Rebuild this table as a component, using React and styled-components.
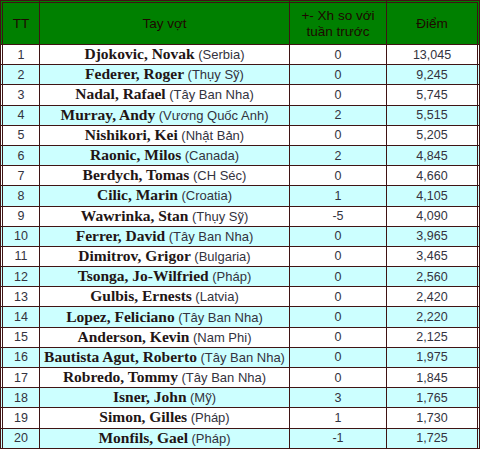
import React from "react";
import styled, { createGlobalStyle } from "styled-components";

const players = [
    ["Djokovic, Novak", "Serbia", "0", "13,045"],
    ["Federer, Roger", "Thụy Sỹ", "0", "9,245"],
    ["Nadal, Rafael", "Tây Ban Nha", "0", "5,745"],
    ["Murray, Andy", "Vương Quốc Anh", "2", "5,515"],
    ["Nishikori, Kei", "Nhật Bản", "0", "5,205"],
    ["Raonic, Milos", "Canada", "2", "4,845"],
    ["Berdych, Tomas", "CH Séc", "0", "4,660"],
    ["Cilic, Marin", "Croatia", "1", "4,105"],
    ["Wawrinka, Stan", "Thụy Sỹ", "-5", "4,090"],
    ["Ferrer, David", "Tây Ban Nha", "0", "3,965"],
    ["Dimitrov, Grigor", "Bulgaria", "0", "3,465"],
    ["Tsonga, Jo-Wilfried", "Pháp", "0", "2,560"],
    ["Gulbis, Ernests", "Latvia", "0", "2,420"],
    ["Lopez, Feliciano", "Tây Ban Nha", "0", "2,220"],
    ["Anderson, Kevin", "Nam Phi", "0", "2,125"],
    ["Bautista Agut, Roberto", "Tây Ban Nha", "0", "1,975"],
    ["Robredo, Tommy", "Tây Ban Nha", "0", "1,845"],
    ["Isner, John", "Mỹ", "3", "1,765"],
    ["Simon, Gilles", "Pháp", "1", "1,730"],
    ["Monfils, Gael", "Pháp", "-1", "1,725"],
];

const App = () => {
    return (
        <>
            <GlobalStyle />
            <Table>
                <colgroup>
                    <col style={{ width: 40 }} />
                    <col style={{ width: 250 }} />
                    <col style={{ width: 97 }} />
                    <col style={{ width: 93 }} />
                </colgroup>
                <thead>
                    <tr>
                        <HeadCell>TT</HeadCell>
                        <HeadCell>Tay vợt</HeadCell>
                        <HeadCell>
                            +- Xh so với
                            <br />
                            tuần trước
                        </HeadCell>
                        <HeadCell>Điểm</HeadCell>
                    </tr>
                </thead>
                <tbody>
                    {players.map(([name, country, diff, points], i) => (
                        <Row key={name} $alt={i % 2 === 1}>
                            <Cell>{i + 1}</Cell>
                            <Cell>
                                <Name>{name}</Name> <Country>({country})</Country>
                            </Cell>
                            <Cell>{diff}</Cell>
                            <Cell>{points}</Cell>
                        </Row>
                    ))}
                </tbody>
            </Table>
        </>
    );
};

const GlobalStyle = createGlobalStyle`
    body {
        margin: 0;
        background: #ffffff;
    }
`;

const Table = styled.table`
    width: 480px;
    table-layout: fixed;
    border-collapse: separate;
    border-spacing: 0;
    font-family: "Liberation Sans", Arial, sans-serif;
    font-size: 12.5px;
    color: #333340;

    td,
    th {
        border-right: 1px solid #3f1414;
        border-bottom: 1px solid #3f1414;
        text-align: center;
        padding: 0;
    }

    td:first-child,
    th:first-child {
        border-left: 3px double #3f1414;
    }

    td:last-child,
    th:last-child {
        border-right: 3px double #3f1414;
    }
`;

const HeadCell = styled.th`
    height: 41px;
    padding-top: 2px;
    background-color: #008000;
    border-top: 3px double #3f1414;
    color: #1e0800;
    font-weight: normal;
    font-size: 13.5px;
    line-height: 16px;
`;

const Row = styled.tr`
    background-color: ${(props) => (props.$alt ? "#ccffff" : "#ffffff")};

    td {
        height: 19.2px;
        line-height: 18px;
    }
`;

const Cell = styled.td`
    white-space: nowrap;
`;

const Name = styled.b`
    font-family: "Liberation Serif", "Times New Roman", serif;
    font-size: 15.5px;
    color: #221515;
`;

const Country = styled.span`
    font-size: 13px;
    color: #333340;
`;

export default App;
